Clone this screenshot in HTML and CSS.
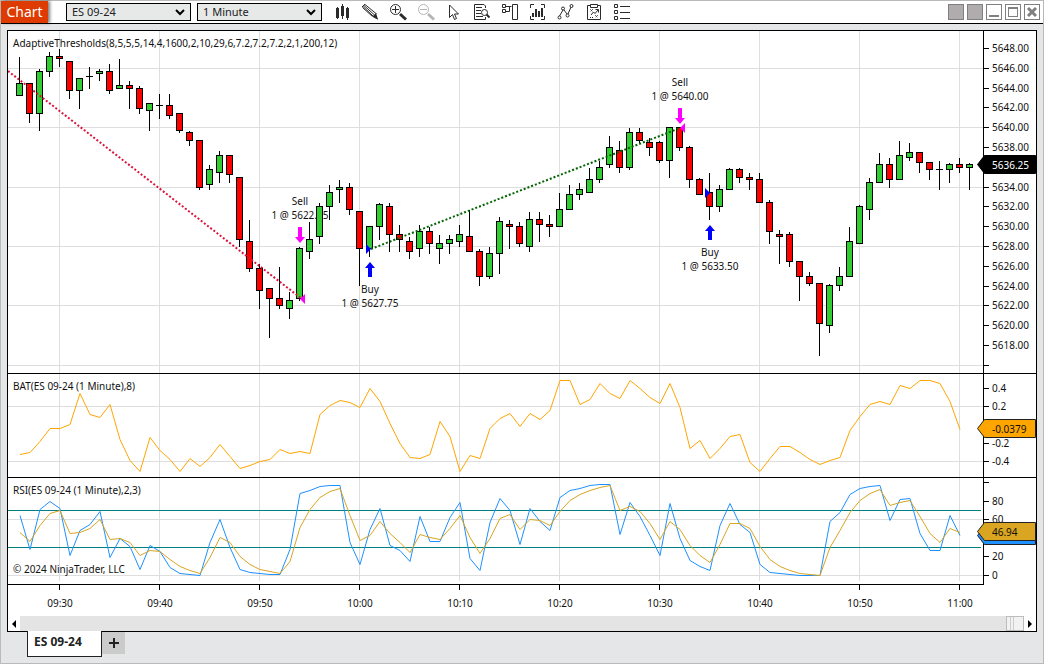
FILE: index.html
```html
<!DOCTYPE html>
<html lang="en">
<head>
<meta charset="utf-8">
<title>Chart - ES 09-24</title>
<link rel="stylesheet" href="styles.css">
</head>
<body>
<div class="window">
  <header class="toolbar">
    <h1 class="title">Chart</h1>
    <div class="pickers">
      <select class="picker" aria-label="Instrument"><option>ES 09-24</option></select>
      <select class="picker" aria-label="Interval"><option>1 Minute</option></select>
    </div>
    <div class="tools">
      <button class="tool" aria-label="Chart style"><svg viewBox="0 0 18 18"><path fill="#2b2b2b" d="M3 5h1V4h1v1h1v10H5v1H4v-1H3zM8 3h1V1h1v2h1v10h-1v3H9v-3H8zM13 5h1V4h1v1h1v10h-1v2h-1v-2h-1z"/></svg></button>
      <button class="tool" aria-label="Drawing tools"><svg viewBox="0 0 18 18"><path class="ln" d="M1 4l3-3M2 3.500l10 9.500M4 1.500l11 9M3 2.500l10.500 9.500"/><path stroke="#2b2b2b" d="M1.500 4.500l10 9M12 14l3.500-3.500M12 13.500l4.500 2.500"/><path fill="#2b2b2b" d="M11.500 13.500l3.500-3.500 2 6.500z"/></svg></button>
      <button class="tool" aria-label="Zoom in"><svg viewBox="0 0 18 18"><circle class="ln" cx="6.500" cy="6.500" r="5"/><path class="ln" d="M3 6.500h7M6.500 3v7"/><path stroke="#2b2b2b" stroke-width="3" d="M11 11l6 5.500"/></svg></button>
      <button class="tool" aria-label="Zoom out" disabled><svg viewBox="0 0 18 18"><circle class="ln dim" cx="6.500" cy="6.500" r="5"/><path class="ln dim" d="M3 6.500h7"/><path stroke="#b5b5b5" stroke-width="3" d="M11 11l6 5.500"/></svg></button>
      <button class="tool" aria-label="Cursor"><svg viewBox="0 0 18 18"><path class="ln" d="M4.500 2v12.500l3-3 2 5 2-1-2-4.500h4z"/></svg></button>
      <button class="tool" aria-label="Data box"><svg viewBox="0 0 18 18"><path class="ln" d="M12.500 5V3l-1.500-1.500H1.500v15h11V14M3 4.500h6M3 7.500h5M3 10.500h5M3 13.500h7"/><circle class="ln" cx="11.500" cy="9.500" r="3"/><path stroke="#2b2b2b" stroke-width="2" d="M13.500 11.500l3 3"/></svg></button>
      <button class="tool" aria-label="Chart trader"><svg viewBox="0 0 18 18"><path class="ln" d="M1.500 1.500h3v3h-3zM1.500 6.500h3v3h-3zM4.500 3.500h6M4.500 8.500h4V4M11.500 1.500h5v15h-5z"/></svg></button>
      <button class="tool" aria-label="Indicators"><svg viewBox="0 0 18 18"><path class="ln" d="M5 1.500H1.500V5M12 1.500h3.500V5M1.500 13v3.500H5M15.500 13v3.500H12"/><path fill="#2b2b2b" d="M3 10h2v4H3zM6 6h2v8H6zM9 8h2v6H9zM12 5h2v9h-2z"/></svg></button>
      <button class="tool" aria-label="Strategies"><svg viewBox="0 0 18 18"><path class="ln" d="M2.500 13L6 7M7 7l3 4M11 11l3-7"/><circle class="ln" cx="2.500" cy="14.500" r="1.500"/><circle class="ln" cx="6" cy="5.500" r="1.500"/><circle class="ln" cx="10.500" cy="12.500" r="1.500"/><circle class="ln" cx="14.500" cy="3" r="1.500"/></svg></button>
      <button class="tool" aria-label="Strategy analyzer"><svg viewBox="0 0 18 18"><path class="ln" d="M5 2.500H2.500v14h13v-14H13M5.500 1.500h7v3h-7zM6 12l2.500-3 1.500 1.500L13 7M10.500 6.500h3v3"/><path class="ln" stroke-dasharray="1 1" d="M5 6l3 3M8 6L5 9M10 12l3 3M13 12l-3 3M5 14.500h3"/></svg></button>
      <button class="tool" aria-label="Properties"><svg viewBox="0 0 18 18"><path class="ln" d="M1.500 1.500h3v3h-3zM1.500 7.500h3v3h-3zM1.500 13.500h3v3h-3zM7 3.500h10M7 9.500h10M7 15.500h10"/></svg></button>
    </div>
    <div class="window-buttons">
      <button class="win solid" aria-label="Instrument link"></button>
      <button class="win solid" aria-label="Interval link"></button>
      <button class="win" aria-label="Minimize"><svg viewBox="0 0 14 14"><path fill="#808080" d="M2 10h10v2H2z"/></svg></button>
      <button class="win" aria-label="Maximize"><svg viewBox="0 0 14 14"><path fill="#808080" fill-rule="evenodd" d="M2 2h10v10H2zM3 4v7h8V4z"/></svg></button>
      <button class="win" aria-label="Close"><svg viewBox="0 0 14 14"><path stroke="#808080" stroke-width="3" d="M3 3l8 8M11 3l-8 8"/></svg></button>
    </div>
  </header>

  <main class="frame">
    <section class="panel price">
      <svg class="plot" id="price-plot" role="img" aria-label="ES 09-24 one minute candles"></svg>
      <svg class="axis" id="price-axis"></svg>
    </section>
    <section class="panel bat">
      <svg class="plot" id="bat-plot" role="img" aria-label="BAT indicator"></svg>
      <svg class="axis" id="bat-axis"></svg>
    </section>
    <section class="panel rsi">
      <svg class="plot" id="rsi-plot" role="img" aria-label="RSI indicator"></svg>
      <svg class="axis" id="rsi-axis"></svg>
    </section>
    <svg class="time-axis" id="time-axis"></svg>
    <div class="scrollbar">
      <button class="scroll-arrow" aria-label="Scroll left"><svg viewBox="0 0 4 8"><path d="M4 0v8L0 4z"/></svg></button>
      <span class="scroll-thumb"></span>
      <button class="scroll-arrow" aria-label="Scroll right"><svg viewBox="0 0 4 8"><path d="M0 0v8l4-4z"/></svg></button>
    </div>
  </main>

  <nav class="tabs">
    <button class="tab">ES 09-24</button>
    <button class="add-tab" aria-label="Add tab"><svg viewBox="0 0 10 10"><path fill="#222" d="M4 0h2v4h4v2H6v4H4V6H0V4h4z"/></svg></button>
  </nav>
</div>
<script src="chart.js"></script>
</body>
</html>
```

FILE: styles.css
```css
* { box-sizing: border-box; }

body {
  margin: 0;
  font-family: "Noto Sans", "Open Sans", sans-serif;
  font-size: 11px;
  color: #111;
}

button { font: inherit; padding: 0; border: 0; background: none; }

.window {
  min-height: 100vh;
  display: flex;
  flex-direction: column;
  background: #e5e6e8;
  border: 1px solid #bababa;
}

.toolbar {
  display: flex;
  align-items: center;
  height: 23px;
  background: #fff;
  border-bottom: 1px solid #000;
}

.title {
  align-self: stretch;
  margin: 0;
  width: 47px;
  text-align: center;
  background: #de3b02;
  color: #fff;
  font-size: 14px;
  font-weight: 400;
  line-height: 22px;
  box-shadow: 2px 0 3px rgba(0, 0, 0, .5);
}

.pickers { display: flex; gap: 6px; margin-left: 18px; }

.picker {
  appearance: none;
  width: 125px;
  height: 18px;
  padding: 0 5px;
  border: 1px solid #000;
  border-radius: 0;
  background: #e7e9e9;
  color: #222;
  font-family: inherit;
  font-size: 11px;
  line-height: 16px;
  background-image: url("data:image/svg+xml,%3Csvg xmlns='http://www.w3.org/2000/svg' viewBox='0 0 10 7'%3E%3Cpath d='M1 1l4 4 4-4' fill='none' stroke='black' stroke-width='2'/%3E%3C/svg%3E");
  background-repeat: no-repeat;
  background-position: right 5px center;
  background-size: 10px 7px;
}

.tools { display: flex; margin-left: 6px; }
.tool { display: flex; justify-content: center; width: 28px; height: 18px; }
.tool svg { width: 18px; height: 18px; fill: none; }
.ln { fill: none; stroke: #2b2b2b; }
.ln.dim { stroke: #b5b5b5; }

.window-buttons { display: flex; gap: 3px; margin-left: auto; margin-right: 3px; }
.win {
  width: 16px;
  height: 16px;
  border: 1px solid #808080;
  background: #fff;
}
.win svg { display: block; width: 14px; height: 14px; }
.win.solid { background: #b0acae; }

.frame {
  margin: 6px 6px 0;
  border: 1px solid #000;
  background: #fff;
}

.panel {
  display: grid;
  grid-template-columns: 1fr 52px;
  grid-template-rows: 100%;
  border-bottom: 1px solid #000;
}
.price { height: 343px; }
.bat { height: 104px; }
.rsi { height: 107px; border-bottom: 0; }

.plot {
  display: block;
  width: 100%;
  height: 100%;
  border-right: 1px solid #000;
}
.rsi .plot { border-bottom: 1px solid #000; }

.axis { display: block; width: 52px; height: 100%; overflow: visible; }
.time-axis { display: block; width: 100%; height: 31px; }

text { font-size: 10px; fill: #111; }
.mid { text-anchor: middle; }
.grid { stroke: #dedede; shape-rendering: crispEdges; }
.tick { stroke: #000; shape-rendering: crispEdges; }
.level { stroke: #008080; shape-rendering: crispEdges; }
.wick { stroke: #000; shape-rendering: crispEdges; }
.up, .down { stroke: #000; shape-rendering: crispEdges; }
.up { fill: #32cd32; }
.down { fill: #f00; }
.line { fill: none; }
.orange { stroke: #ffa500; }
.blue { stroke: #1e90ff; }
.gold { stroke: #daa520; }
.loss, .win-line { fill: none; stroke-width: 2; stroke-dasharray: 2 2; }
.loss { stroke: #dc143c; }
.win-line { stroke: #006400; }
.sell { fill: #f0f; }
.buy { fill: #00f; }
.tag { stroke: #222; }
.tag-price { fill: #000; stroke: #000; }
.tag-orange { fill: #ffa500; }
.tag-blue { fill: #1e90ff; }
.tag-gold { fill: #daa520; }
.light { fill: #fff; }

.scrollbar { display: flex; height: 15px; background: #e4e4e4; }
.scroll-arrow {
  display: flex;
  align-items: center;
  justify-content: center;
  width: 12px;
  background: #fff;
}
.scroll-arrow svg { width: 4px; height: 8px; }
.scroll-thumb {
  width: 18px;
  margin-left: auto;
  border: 1px solid #bcbcbc;
  background: linear-gradient(90deg, transparent 3px, #ccc 3px 4px, transparent 4px 6px, #ccc 6px 7px, transparent 7px) #f2f2f2;
}

.tabs { display: flex; align-items: flex-start; padding: 0 26px 6px; }
.tab {
  position: relative;
  width: 75px;
  height: 26px;
  margin-top: -1px;
  padding: 2px 6px 6px;
  border: 1px solid #222;
  border-top: 0;
  background: #fff;
  color: #222;
  font-size: 12px;
  font-weight: 700;
  line-height: 17px;
  text-align: left;
}
.add-tab {
  display: flex;
  align-items: center;
  justify-content: center;
  width: 23px;
  height: 22px;
  background: #cbcbcb;
}
.add-tab svg { width: 10px; height: 10px; }
```

FILE: chart.js
```js
// One entry per minute: high, body top, body bottom, low, direction (u / d / doji "-").
const candles = `57 83 96 96 u|83 83 114 123 d|69 71 114 131 u|52 56 72 77 u|49 56 59 67 d|61 61 91 99 d|78 78 91 109 u|67 76 77 89 -
69 71 74 81 u|64 71 91 94 d|59 85 89 89 u|81 85 89 109 d|86 88 109 114 d|103 103 111 131 u|94 105 106 119 -|94 105 116 119 d
113 113 131 133 d|131 132 141 146 d|140 140 188 190 d|165 169 185 190 u|151 155 173 183 u|155 155 175 183 d|177 177 240 247 d
220 241 269 272 d|264 268 291 309 d|288 288 299 338 d|267 298 306 309 d|292 300 309 319 u|247 248 299 301 u|222 239 252 259 u
203 206 237 244 u|185 192 207 220 u|180 187 190 203 u|183 187 210 215 d|211 211 249 286 d|226 226 249 257 u|203 204 227 240 u
203 206 235 252 d|225 234 240 252 d|237 241 252 259 d|225 231 249 257 u|227 231 244 254 d|235 243 249 264 u|235 239 244 254 u
225 234 242 247 u|210 236 252 252 d|249 251 277 286 d|247 253 277 279 u|217 221 254 274 u|220 224 227 249 d|222 226 244 247 d
212 219 247 252 u|212 219 225 242 d|215 224 227 237 d|193 209 227 227 u|185 194 210 210 u|183 189 195 200 u|168 179 193 193 u
161 167 180 183 u|136 147 165 168 u|141 150 168 173 d|128 132 168 170 u|128 132 141 143 d|138 142 148 156 d|141 142 161 163 d
127 127 161 178 u|127 127 148 151 d|146 147 180 188 d|178 179 195 195 d|173 192 207 220 d|185 189 207 212 u|168 169 190 190 u
168 169 178 183 d|173 177 180 190 d|173 179 203 203 d|200 202 232 244 d|230 234 237 264 d|232 234 262 267 d|261 261 277 301 d
272 276 284 286 d|283 283 324 356 d|284 285 326 333 u|267 276 286 291 u|227 241 277 277 u|205 206 244 244 u|178 182 210 220 u
153 164 183 183 u|158 164 180 188 d|141 155 180 180 u|143 152 158 161 u|152 152 163 173 d|162 162 170 180 d|161 169 170 190 -
163 164 170 183 u|158 164 168 173 d|163 164 168 190 u`.split(/[|\n]/).map(c => c.split(" "));

const bat = [454,452,441,428,428,424,393,414,417,404,439,460,471,437,450,459,471,458,466,457,444,456,468,465,461,459,449,453,451,453,
  414,405,400,402,407,388,401,423,443,457,458,454,421,436,471,455,458,428,418,413,426,413,419,410,380,380,404,399,383,393,398,380,
  388,397,403,383,407,448,440,458,448,436,434,462,471,458,446,446,452,459,464,460,457,430,416,404,401,404,385,388,380,380,383,401,429];

const rsi = [515,549,509,501,508,555,530,524,511,557,538,546,569,545,551,567,573,574,575,542,519,547,569,572,573,574,574,549,493,490,
  486,485,485,542,564,529,508,545,550,561,516,541,541,517,502,558,570,522,498,510,544,508,521,530,497,490,488,485,484,484,534,502,
  516,535,555,503,538,560,566,570,525,503,524,532,564,572,573,574,575,575,575,521,512,494,488,486,485,520,499,498,533,550,550,515,535];

const rsiAvg = [532,541,525,513,510,533,532,528,519,539,538,542,555,550,551,559,566,570,573,557,537,542,556,564,569,571,573,561,527,509,
  497,491,488,515,540,535,521,533,542,552,534,537,539,528,515,537,553,538,518,514,529,519,520,525,511,500,494,490,487,485,510,506,
  511,523,539,521,529,545,555,562,544,523,523,528,546,559,566,570,573,574,575,547,530,512,500,493,489,505,502,500,516,533,542,528,532];

const LEFT = 8;
const AXIS = 984;

const vline = (x, y1, y2, c) => `<line class="${c}" x1="${x + .5}" x2="${x + .5}" y1="${y1}" y2="${y2}"/>`;
const hline = (y, x2, c, x1 = LEFT) => `<line class="${c}" x1="${x1}" x2="${x2}" y1="${y + .5}" y2="${y + .5}"/>`;
const text = (x, y, s, c = "") => s ? `<text class="${c}" x="${x}" y="${y}">${s}</text>` : "";
const group = (x, y, body) => `<g transform="translate(${-x} ${-y})">${body}</g>`;
const fill = (id, html) => { document.getElementById(id).innerHTML = html; };

const hours = [...Array(10)].map((_, i) => 59 + i * 100);
const grid = (rows, top, bottom) =>
  hours.map(x => vline(x, top, bottom, "grid")).join("") + rows.map(y => hline(y, "105%", "grid")).join("");
const series = (ys, c) => `<polyline class="line ${c}" points="${ys.map((y, i) => `${20 + i * 10},${y + .5}`).join(" ")}"/>`;

const candle = ([h, t, b, l, d], i) => {
  const x = 19 + i * 10;
  const body = d === "-" ? hline(+t, x + 4, "wick", x - 3)
    : `<rect class="${d === "u" ? "up" : "down"}" x="${x - 2.5}" y="${+t + .5}" width="6" height="${b - t - 1}"/>`;
  return vline(x, h, l, "wick") + body;
};

const arrowDown = (x, y) => `<path class="sell" d="M${x - 2} ${y}h4v10h3l-5 6l-5-6h3z"/>`;
const arrowUp = (x, y) => `<path class="buy" d="M${x} ${y}l5 6h-3v9h-4v-9h-3z"/>`;
const fillLeft = (x, y) => `<path class="sell" d="M${x} ${y}l5-5v10z"/>`;
const fillRight = (x, y) => `<path class="buy" d="M${x} ${y}l-5-5v10z"/>`;
const order = (x, y, side, price) => text(x, y, side, "mid") + text(x, y + 14, `1 @ ${price}`, "mid");

const tag = (y, c, label = "", t = "") =>
  `<path class="tag ${c}" d="M977.5 ${y + 9.5}l7-9h51v18h-51z"/>` + text(992, y + 14, label, t);
const ticks = list => list.map(([y, s]) => hline(y, AXIS + 5, "tick", AXIS) + text(992, y + 4, s)).join("");

fill("price-plot", group(LEFT, 31,
  grid([68, 127, 187, 246, 305, 365], 31, 373) +
  text(13, 47, "AdaptiveThresholds(8,5,5,5,14,4,1600,2,10,29,6,7.2,7.2,7.2,2,1,200,12)") +
  order(300, 205, "Sell", "5622.75") + order(370, 293, "Buy", "5627.75") +
  order(680, 86, "Sell", "5640.00") + order(710, 256, "Buy", "5633.50") +
  candles.map(candle).join("") +
  `<path class="loss" d="M8 71L302 299"/><path class="win-line" d="M371 249L680 128"/>` +
  fillLeft(300, 299) + fillRight(371, 249) + fillLeft(680, 128) + fillRight(710, 193) +
  arrowDown(300, 227) + arrowUp(370, 262) + arrowDown(680, 108) + arrowUp(710, 225)));

const priceTicks = [...Array(17)].map((_, i) => [Math.round(48 + i * 19.8), i === 16 ? "" : `${5648 - i * 2}.00`])
  .filter((_, i) => i !== 6);
fill("price-axis", group(AXIS, 31, ticks(priceTicks) + tag(155, "tag-price", "5636.25", "light")));

fill("bat-plot", group(LEFT, 374,
  grid([406, 461], 374, 477) + text(13, 390, "BAT(ES 09-24 (1 Minute),8)") + series(bat, "orange")));
fill("bat-axis", group(AXIS, 374,
  ticks([[388, "0.4"], [406, "0.2"], [443, "-0.2"], [461, "-0.4"]]) + tag(419, "tag-orange", "-0.0379")));

fill("rsi-plot", group(LEFT, 478,
  grid([519, 575], 478, 581) + hline(510, 981, "level") + hline(547, 981, "level") +
  text(13, 494, "RSI(ES 09-24 (1 Minute),2,3)") + series(rsi, "blue") + series(rsiAvg, "gold") +
  text(13, 573, "© 2024 NinjaTrader, LLC")));
fill("rsi-axis", group(AXIS, 478,
  ticks([[482, ""], [501, "80"], [519, "60"], [556, "20"], [575, "0"]]) + tag(526, "tag-blue") + tag(522, "tag-gold", "46.94")));

const times = ["09:30", "09:40", "09:50", "10:00", "10:10", "10:20", "10:30", "10:40", "10:50", "11:00"];
fill("time-axis", group(LEFT, 585,
  times.map((t, i) => vline(hours[i], 585, 590, "tick") + text(hours[i] + 1, 607, t, "mid")).join("")));
```
